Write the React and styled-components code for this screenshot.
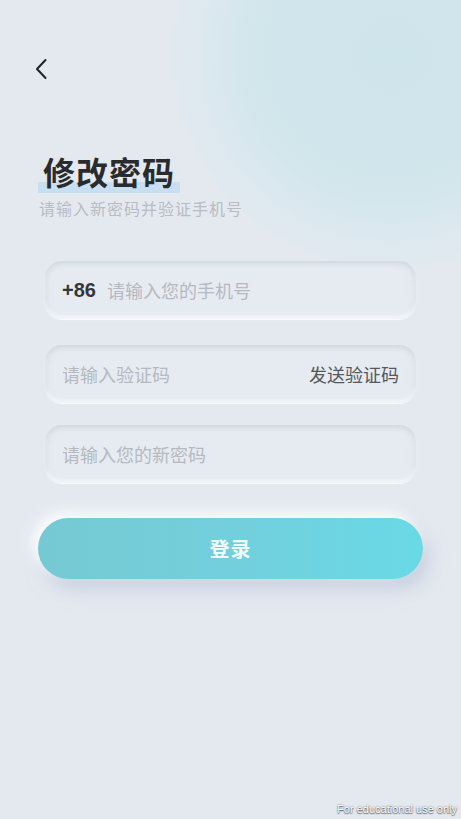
import React from "react";
import styled, { createGlobalStyle } from "styled-components";

const GlobalStyle = createGlobalStyle`
  html, body {
    margin: 0;
    padding: 0;
    background: #e4e9f0;
  }
  * {
    box-sizing: border-box;
  }
`;

function App() {
  return (
    <>
      <GlobalStyle />
      <Page>
        <Glow />
        <BackButton aria-label="back">
          <svg width="14" height="22" viewBox="0 0 14 22" fill="none">
            <path d="M11.5 2 L3 11 L11.5 20" stroke="#222" strokeWidth="2" strokeLinecap="round" strokeLinejoin="round" />
          </svg>
        </BackButton>

        <TitleBlock>
          <Title>
            <Mark />
            <TitleText>修改密码</TitleText>
          </Title>
          <Subtitle>请输入新密码并验证手机号</Subtitle>
        </TitleBlock>

        <Form>
          <Field>
            <Prefix>+86</Prefix>
            <Placeholder>请输入您的手机号</Placeholder>
          </Field>
          <Field $gap={26}>
            <Placeholder>请输入验证码</Placeholder>
            <SendCode>发送验证码</SendCode>
          </Field>
          <Field $gap={22}>
            <Placeholder>请输入您的新密码</Placeholder>
          </Field>
        </Form>

        <LoginButton>登录</LoginButton>

        <Watermark>For educational use only</Watermark>
      </Page>
    </>
  );
}

const Page = styled.div`
  position: relative;
  width: 461px;
  height: 819px;
  overflow: hidden;
  background: #e4e9f0;
  font-family: "Noto Sans CJK SC", "Noto Sans", sans-serif;
  display: flex;
  flex-direction: column;
`;

const Glow = styled.div`
  position: absolute;
  top: -160px;
  right: -150px;
  width: 440px;
  height: 430px;
  border-radius: 50%;
  background: radial-gradient(
    ellipse at center,
    rgba(206, 229, 235, 1) 0%,
    rgba(209, 230, 236, 0.95) 45%,
    rgba(218, 232, 239, 0.6) 63%,
    rgba(228, 233, 240, 0) 75%
  );
  pointer-events: none;
`;

const BackButton = styled.div`
  position: relative;
  margin: 57px 0 0 34px;
  width: 20px;
  height: 24px;
  display: flex;
  align-items: center;
`;

const TitleBlock = styled.div`
  position: relative;
  margin: 70px 0 0 38px;
  display: flex;
  flex-direction: column;
`;

const Title = styled.div`
  position: relative;
  align-self: flex-start;
  padding: 0 5px 0 5px;
  height: 40px;
`;

const Mark = styled.div`
  position: absolute;
  left: 0;
  right: 0;
  bottom: -2px;
  height: 11px;
  background: #c8dff1;
`;

const TitleText = styled.h1`
  position: relative;
  margin: 0;
  font-size: 32px;
  line-height: 40px;
  font-weight: 700;
  color: #2a2b2d;
  letter-spacing: 1px;
`;

const Subtitle = styled.div`
  margin-top: 8px;
  padding-left: 1px;
  font-size: 16px;
  line-height: 18px;
  letter-spacing: 1px;
  color: #b8bcc3;
`;

const Form = styled.div`
  position: relative;
  margin: 44px 45px 0 45px;
  display: flex;
  flex-direction: column;
`;

const Field = styled.div`
  margin-top: ${(p) => p.$gap || 0}px;
  height: 58px;
  border-radius: 17px;
  background: #e6ebf2;
  padding: 0 17px;
  display: flex;
  align-items: center;
  box-shadow:
    inset 0 3px 5px rgba(200, 208, 220, 0.55),
    inset 0 -3px 4px rgba(255, 255, 255, 0.75),
    inset 3px 0 5px rgba(210, 216, 226, 0.35),
    inset -3px 0 5px rgba(210, 216, 226, 0.35),
    0 1px 1px rgba(255, 255, 255, 0.8);
`;

const Prefix = styled.span`
  font-family: "Liberation Sans", "Noto Sans CJK SC", sans-serif;
  font-size: 20px;
  font-weight: 700;
  color: #35373b;
  margin-right: 11px;
`;

const Placeholder = styled.span`
  flex: 1;
  font-size: 18px;
  color: #b6b9bf;
`;

const SendCode = styled.span`
  font-size: 18px;
  color: #55585d;
`;

const LoginButton = styled.div`
  position: relative;
  margin: 35px 38px 0 38px;
  height: 61px;
  border-radius: 31px;
  background: linear-gradient(90deg, #76c9d3 0%, #72d0dd 55%, #69d9e6 100%);
  display: flex;
  align-items: center;
  justify-content: center;
  font-size: 20px;
  font-weight: 700;
  color: #eefbfd;
  letter-spacing: 1px;
  box-shadow:
    -6px -6px 14px rgba(255, 255, 255, 0.85),
    6px 10px 18px rgba(180, 192, 212, 0.6);
`;

const Watermark = styled.div`
  position: absolute;
  right: 4px;
  bottom: 4px;
  font-family: "Liberation Sans", sans-serif;
  font-size: 11px;
  color: #ffffff;
  text-shadow: 0 0 2px rgba(0, 0, 0, 0.6), 0 1px 1px rgba(0, 0, 0, 0.5);
`;

export default App;
